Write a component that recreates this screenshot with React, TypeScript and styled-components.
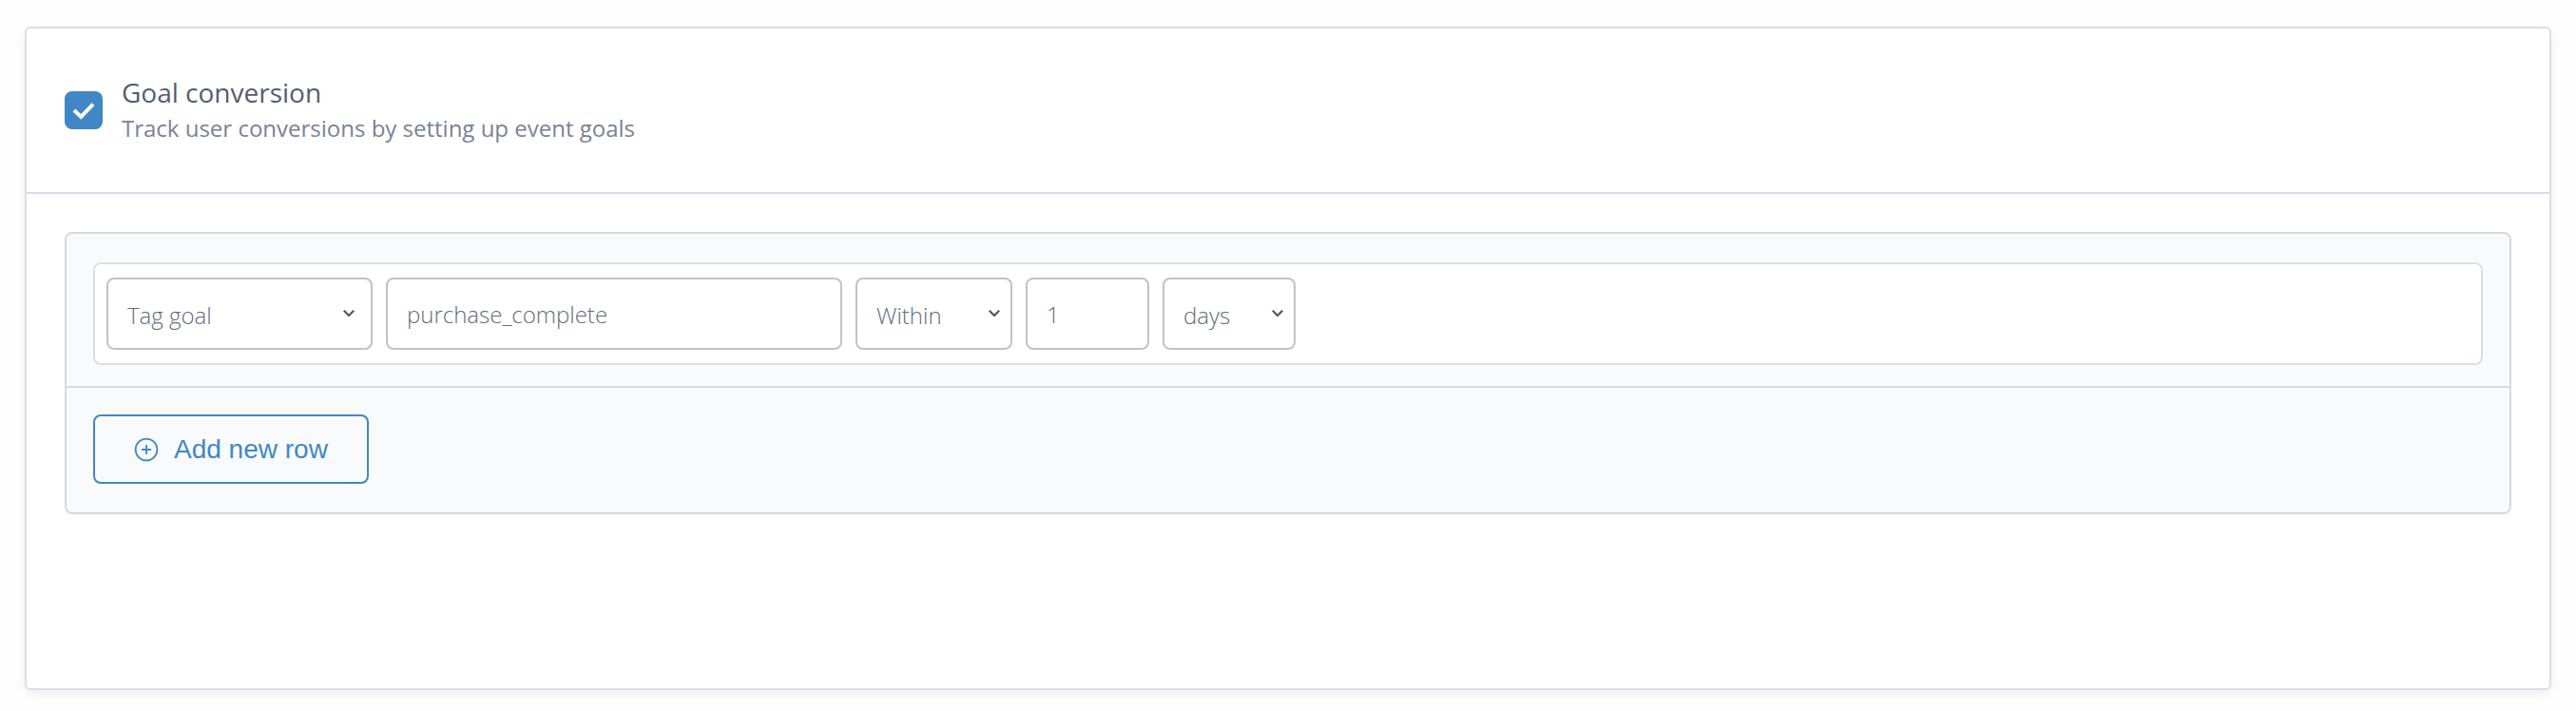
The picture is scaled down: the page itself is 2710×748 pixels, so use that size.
import React, { useState } from "react";
import styled, { createGlobalStyle } from "styled-components";

const GlobalStyle = createGlobalStyle`
  * { box-sizing: border-box; }
  body {
    margin: 0;
    background: #fefefe;
    font-family: "Open Sans", "Noto Sans", sans-serif;
  }
`;

const Page = styled.main`
  display: flex;
  min-height: 100vh;
  padding: 28px 26px 22px;
`;

const Card = styled.section`
  flex: 1;
  min-width: 0;
  background: #ffffff;
  border: 2px solid #dbdee7;
  border-radius: 6px;
  box-shadow: 0 4px 12px rgba(0, 0, 0, 0.06);
`;

const CardHeader = styled.header`
  display: flex;
  align-items: center;
  gap: 20px;
  padding: 48px 40px;
  border-bottom: 2px solid #dbdee7;
`;

const CheckBox = styled.span`
  position: relative;
  display: block;
  width: 40px;
  height: 40px;
`;

const CheckInput = styled.input`
  appearance: none;
  display: block;
  width: 40px;
  height: 40px;
  margin: 0;
  border-radius: 8px;
  background: #c1c1c1;
  cursor: pointer;

  &:checked {
    background: #3f88c5;
  }
`;

const CheckMark = styled.svg`
  position: absolute;
  inset: 0;
  pointer-events: none;
`;

const HeaderText = styled.div`
  line-height: 38px;
`;

const Title = styled.label`
  display: block;
  color: #565c70;
  font-size: 28px;
`;

const Subtitle = styled.p`
  margin: 0;
  color: #7a8296;
  font-size: 24px;
`;

const CardBody = styled.div`
  padding: 40px;
`;

const Panel = styled.div`
  background: #f9fafc;
  border: 2px solid #d8d9da;
  border-radius: 8px;
`;

const PanelRows = styled.div`
  padding: 30px 28px 22px;
  border-bottom: 2px solid #d8d9da;
`;

const PanelFooter = styled.div`
  padding: 28px 28px 30px;
`;

const GoalRow = styled.div`
  display: flex;
  flex-wrap: wrap;
  gap: 14px;
  padding: 14px 12px;
  background: #ffffff;
  border: 2px solid #dbdee7;
  border-radius: 8px;
`;

const Field = styled.input<{ $width: number }>`
  width: ${(p) => p.$width}px;
  height: 76px;
  padding: 0 20px;
  border: 2px solid #c2c2c2;
  border-radius: 8px;
  background: #ffffff;
  color: #646b7b;
  font-family: inherit;
  font-size: 24px;
  font-weight: 300;
`;

const SelectBox = styled.span<{ $width: number }>`
  position: relative;
  display: block;
  width: ${(p) => p.$width}px;
`;

const SelectInput = styled.select`
  appearance: none;
  display: block;
  width: 100%;
  height: 76px;
  padding: 2px 20px 0;
  border: 2px solid #c2c2c2;
  border-radius: 8px;
  background: #ffffff;
  color: #646b7b;
  font-family: inherit;
  font-size: 24px;
  font-weight: 300;
`;

const Chevron = styled.svg<{ $inset: number }>`
  position: absolute;
  top: 33px;
  right: ${(p) => p.$inset}px;
  pointer-events: none;
`;

const AddButton = styled.button`
  display: flex;
  align-items: center;
  gap: 16px;
  height: 73px;
  padding: 0 41px;
  border: 2px solid #3f88c5;
  border-radius: 8px;
  background: transparent;
  color: #3f88c5;
  font-family: "Liberation Sans", Arial, sans-serif;
  font-size: 28px;
  font-weight: 500;
  cursor: pointer;
`;

interface SelectProps {
  label: string;
  options: string[];
  width: number;
  inset?: number;
}

function Select({ label, options, width, inset = 12 }: SelectProps) {
  return (
    <SelectBox $width={width}>
      <SelectInput aria-label={label}>
        {options.map((o) => (
          <option key={o}>{o}</option>
        ))}
      </SelectInput>
      <Chevron $inset={inset} width="14" height="10" viewBox="0 0 14 10" aria-hidden="true">
        <path d="M1.8 1.8 L7 7 L12.2 1.8" fill="none" stroke="#4f566b" strokeWidth="2.2" />
      </Chevron>
    </SelectBox>
  );
}

export default function App() {
  const [enabled, setEnabled] = useState(true);

  return (
    <>
      <GlobalStyle />
      <Page>
        <Card>
          <CardHeader>
            <CheckBox>
              <CheckInput
                id="goal-conversion"
                type="checkbox"
                checked={enabled}
                onChange={(e) => setEnabled(e.target.checked)}
              />
              <CheckMark width="40" height="40" viewBox="0 0 40 40" aria-hidden="true">
                <path d="M10 20 L17.2 27 L30 13.6" fill="none" stroke="#ffffff" strokeWidth="4" />
              </CheckMark>
            </CheckBox>
            <HeaderText>
              <Title htmlFor="goal-conversion">Goal conversion</Title>
              <Subtitle>Track user conversions by setting up event goals</Subtitle>
            </HeaderText>
          </CardHeader>
          <CardBody>
            <Panel>
              <PanelRows>
                <GoalRow>
                  <Select label="Goal type" options={["Tag goal", "Page goal"]} width={280} inset={18} />
                  <Field aria-label="Goal name" defaultValue="purchase_complete" $width={480} />
                  <Select label="Condition" options={["Within", "After"]} width={165} />
                  <Field aria-label="Amount" inputMode="numeric" defaultValue="1" $width={130} />
                  <Select label="Unit" options={["days", "hours"]} width={140} />
                </GoalRow>
              </PanelRows>
              <PanelFooter>
                <AddButton type="button">
                  <svg width="26" height="26" viewBox="0 0 26 26" fill="none" stroke="currentColor" strokeWidth="1.8" aria-hidden="true">
                    <circle cx="13" cy="13" r="11.4" />
                    <path d="M13 8v10M8 13h10" />
                  </svg>
                  Add new row
                </AddButton>
              </PanelFooter>
            </Panel>
          </CardBody>
        </Card>
      </Page>
    </>
  );
}
